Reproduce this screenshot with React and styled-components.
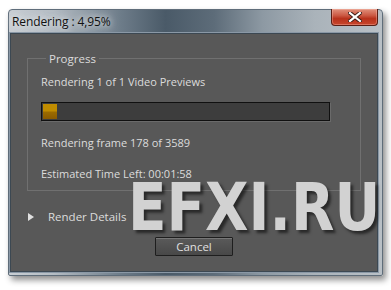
import React from 'react'
import styled, { createGlobalStyle } from 'styled-components';

const Global = createGlobalStyle`
  html, body { margin: 0; padding: 0; background: #ffffff; }
  body { width: 391px; height: 290px; overflow: hidden; }
`;

const Page = styled.div`
  padding: 9px 0 0 8px;
  font-family: "Open Sans", "DejaVu Sans", sans-serif;
`;

const Window = styled.div`
  position: relative;
  width: 375px;
  height: 267px;
  box-sizing: border-box;
  border: 1px solid #5f6d7a;
  border-radius: 4px 4px 2px 2px;
  background: linear-gradient(90deg, #c9ced3 0%, #b4bcc3 12%, #6d7c89 30%, #4a5a68 42%, #5d6c79 55%, #8d99a3 68%, #aab3ba 82%, #b9c0c6 100%);
  box-shadow: 3px 4px 6px rgba(0, 0, 0, 0.45);
  display: flex;
  flex-direction: column;
`;

const TitleBar = styled.div`
  height: 23px;
  display: flex;
  align-items: center;
  justify-content: space-between;
  padding-left: 3px;
`;

const Title = styled.span`
  font-size: 12px;
  color: #111;
  letter-spacing: -0.1px;
  text-shadow: 0 0 6px rgba(235, 238, 240, 0.9), 0 0 10px rgba(235, 238, 240, 0.8);
  margin-top: -1px;
`;

const CloseButton = styled.div`
  align-self: flex-start;
  margin-top: -1px;
  margin-right: 4px;
  width: 47px;
  height: 17px;
  box-sizing: border-box;
  border: 1px solid #5a1e14;
  border-top: none;
  border-radius: 0 0 4px 4px;
  background: linear-gradient(180deg, #e0907c 0%, #cc5a44 40%, #b8321c 60%, #c8462c 100%);
  display: flex;
  align-items: center;
  justify-content: center;
  box-shadow: inset 0 0 0 1px rgba(255, 200, 190, 0.35);
`;

const Body = styled.div`
  flex: 1;
  margin: 0 4px 3px 1px;
  background: #585858;
  border: 1px solid #3c4852;
  box-shadow: 0 0 0 1px #8a98a6;
  display: flex;
  flex-direction: column;
  color: #dcdcdc;
  font-size: 11px;
`;

const Group = styled.fieldset`
  margin: 17px 16px 0 16px;
  padding: 0 0 0 13px;
  border: 1px solid #707070;
  height: 140px;
  box-sizing: border-box;
  min-width: 0;
`;

const Legend = styled.legend`
  padding: 0 3px;
  margin-left: 5px;
  font-size: 11.5px;
  color: #dcdcdc;
`;

const Line = styled.div`
  margin-top: ${({ $top }) => $top}px;
  line-height: 14px;
  white-space: nowrap;
`;

const Bar = styled.div`
  margin-top: 13px;
  width: 289px;
  height: 19px;
  box-sizing: border-box;
  border: 1px solid #101010;
  background: #3d3d3d;
  box-shadow: 1px 1px 0 #6a6a6a;
  padding: 1px;
`;

const Fill = styled.div`
  height: 100%;
  background: linear-gradient(180deg, #c08c00 0%, #c08c00 48%, #9c6c00 52%, #8a5a00 100%);
`;

const DetailsRow = styled.div`
  margin: 18px 0 0 17px;
  display: flex;
  align-items: center;
  gap: 14px;
  font-size: 11.5px;
`;

const Arrow = styled.span`
  width: 0;
  height: 0;
  border-top: 4px solid transparent;
  border-bottom: 4px solid transparent;
  border-left: 6px solid #e0e0e0;
`;

const Cancel = styled.button`
  align-self: center;
  margin-top: 13px;
  width: 78px;
  height: 19px;
  border: 1px solid #1e1e1e;
  border-radius: 1px;
  background: linear-gradient(180deg, #5a5a5a 0%, #484848 100%);
  box-shadow: inset 0 1px 0 #777;
  color: #e0e0e0;
  font-family: "Open Sans", "DejaVu Sans", sans-serif;
  font-size: 11.5px;
  padding: 0;
  line-height: 15px;
`;

const Watermark = styled.div`
  position: absolute;
  left: 119px;
  top: 174px;
  font-family: "DejaVu Sans Condensed", "DejaVu Sans", sans-serif;
  font-weight: bold;
  font-size: 66px;
  color: #d2d2d2;
  text-shadow: 3px 3px 3px rgba(0, 0, 0, 0.55);
  pointer-events: none;
  line-height: 48px;
  transform: scaleX(0.95);
  transform-origin: left top;
`;

const App = () => {
  const pct = 4.95;
  return (
    <>
      <Global />
      <Page>
        <Window>
          <TitleBar>
            <Title>Rendering : 4,95%</Title>
            <CloseButton>
              <svg width="14" height="10" viewBox="0 0 14 10">
                <path d="M2 1 L12 9 M12 1 L2 9" stroke="#3a1a14" strokeWidth="4" strokeLinecap="square" />
                <path d="M2 1 L12 9 M12 1 L2 9" stroke="#ffffff" strokeWidth="2.2" strokeLinecap="square" />
              </svg>
            </CloseButton>
          </TitleBar>
          <Body>
            <Group>
              <Legend>Progress</Legend>
              <Line $top={9}>Rendering 1 of 1 Video Previews</Line>
              <Bar><Fill style={{ width: `${pct}%` }} /></Bar>
              <Line $top={15}>Rendering frame 178 of 3589</Line>
              <Line $top={17}>Estimated Time Left: 00:01:58</Line>
            </Group>
            <DetailsRow><Arrow />Render Details</DetailsRow>
            <Cancel>Cancel</Cancel>
          </Body>
          <Watermark>EFXI.RU</Watermark>
        </Window>
      </Page>
    </>
  )
}

export default App
